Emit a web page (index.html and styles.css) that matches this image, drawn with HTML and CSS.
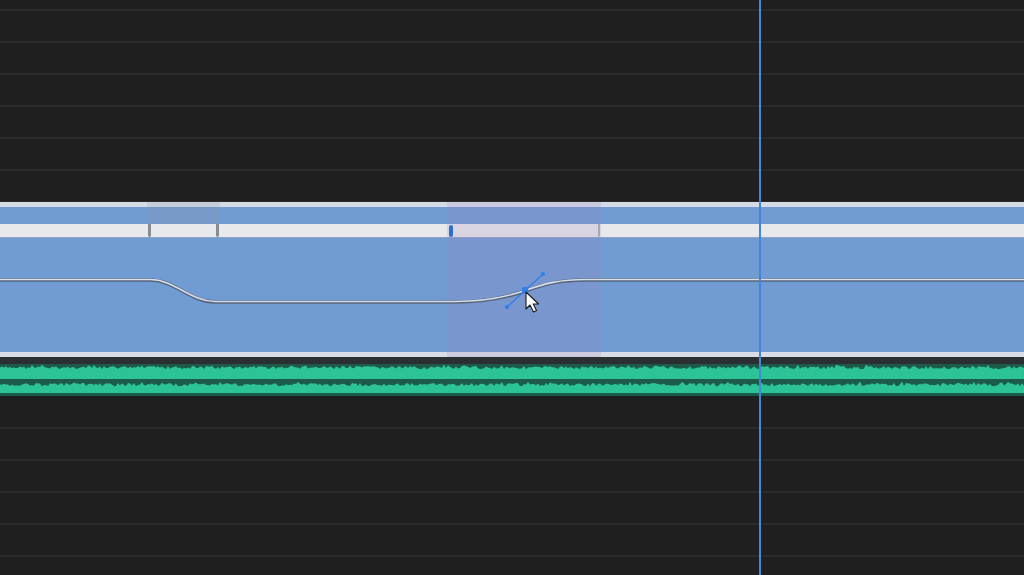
FILE: index.html
```html
<!DOCTYPE html>
<html lang="en">
<head>
  <meta charset="UTF-8">
  <meta name="viewport" content="width=device-width, initial-scale=1.0">
  <title>Timeline - Keyframes</title>
  <link rel="stylesheet" href="styles.css">
</head>
<body>
  <div class="timeline">
    <div class="lanes lanes-top"></div>

    <div class="clip">
      <div class="clip-top"></div>
      <div class="clip-head"></div>
      <div class="clip-bar"></div>
      <div class="clip-body"></div>
      <div class="clip-bottom"></div>

      <div class="tab"></div>
      <div class="pin pin-a"></div>
      <div class="pin pin-b"></div>
      <div class="selection"></div>
      <div class="pin pin-c"></div>
      <div class="pin pin-blue"></div>

      <svg class="curve" width="1024" height="155" viewBox="0 0 1024 155">
        <path d="M0 78 H150 C175 78 190 100 215 100 H455 C485 100 505 96 525 89 C545 82 560 78 585 78 H1024"
              fill="none" stroke="#56657c" stroke-width="3.5"/>
        <path d="M0 77.5 H150 C175 77.5 190 99.5 215 99.5 H455 C485 99.5 505 95.5 525 88.5 C545 81.5 560 77.5 585 77.5 H1024"
              fill="none" stroke="#d6deea" stroke-width="1.6"/>
        <line x1="507" y1="105" x2="543" y2="72" stroke="#2f7fe6" stroke-width="1.4"/>
        <circle cx="507" cy="105" r="2" fill="#2f7fe6"/>
        <circle cx="543" cy="72" r="2" fill="#2f7fe6"/>
        <circle cx="525" cy="88" r="3.2" fill="#2f7fe6"/>
        <path transform="translate(526 90)" d="M0 0 L0 17 L4 13 L7.5 20 L10.5 18.6 L7.2 12 L12.5 12 Z"
              fill="#fff" stroke="#1a1a1a" stroke-width="1.1" stroke-linejoin="round"/>
      </svg>
    </div>

    <div class="gap"></div>

    <div class="audio">
      <svg id="wave" width="1024" height="32" viewBox="0 0 1024 32"></svg>
    </div>

    <div class="lanes lanes-bottom"></div>

    <div class="playhead"></div>
  </div>
  <script src="wave.js"></script>
</body>
</html>
```

FILE: styles.css
```css
* {
  box-sizing: border-box;
}

body {
  margin: 0;
  background-color: #1f1f20;
  font-family: "Liberation Sans", Arial, sans-serif;
  overflow: hidden;
}

.timeline {
  position: relative;
  width: 1024px;
  height: 575px;
  display: flex;
  flex-direction: column;
  overflow: hidden;
}

.lanes {
  background-color: #1f1f20;
}

.lanes-top {
  height: 202px;
  background-image: repeating-linear-gradient(to bottom,
    transparent 0 9px, #2a2a2b 9px 11px, transparent 11px 32px);
}

.lanes-bottom {
  flex: 1;
  background-image: repeating-linear-gradient(to bottom,
    transparent 0 30px, #2a2a2b 30px 32px);
  background-position: 0 1px;
}

/* video clip with volume curve */
.clip {
  position: relative;
  height: 155px;
  display: flex;
  flex-direction: column;
}

.clip-top {
  height: 5px;
  background-color: #d4dbe6;
}

.clip-head {
  height: 17px;
  background-color: #709cd3;
}

.clip-bar {
  height: 14px;
  background-color: #e8e9ec;
  border-bottom: 1px solid #8ea2c2;
}

.clip-body {
  flex: 1;
  background-color: #709cd3;
}

.clip-bottom {
  height: 5px;
  background-color: #d9dde5;
}

.tab {
  position: absolute;
  left: 147px;
  top: 0;
  width: 73px;
  height: 22px;
  background-color: rgba(150, 150, 165, 0.2);
}

.selection {
  position: absolute;
  left: 447px;
  top: 0;
  width: 154px;
  height: 155px;
  background-color: rgba(165, 130, 190, 0.2);
}

.pin {
  position: absolute;
  top: 22px;
  width: 3px;
  height: 14px;
  background-color: #868a92;
  clip-path: polygon(0 0, 100% 0, 100% 80%, 50% 100%, 0 80%);
}

.pin-a { left: 148px; }
.pin-b { left: 216px; }
.pin-c {
  left: 598px;
  width: 2px;
  background-color: #a7a9b0;
}

.pin-blue {
  left: 449px;
  top: 23px;
  width: 4px;
  height: 12px;
  background-color: #2f6fd2;
  border-radius: 2px;
  clip-path: none;
}

.curve {
  position: absolute;
  left: 0;
  top: 0;
}

.gap {
  height: 7px;
  background-color: #2c2f32;
}

/* audio clip */
.audio {
  height: 32px;
  background-color: #1c5a4a;
}

.audio svg {
  display: block;
}

.playhead {
  position: absolute;
  left: 759px;
  top: 0;
  width: 2px;
  height: 575px;
  background-color: #4287dc;
}
```

FILE: wave.js
```js
// draws the two audio channels with a jagged top edge
(function () {
  var svg = document.getElementById('wave');
  var ns = 'http://www.w3.org/2000/svg';
  var seed = 7;

  function rand() {
    seed = (seed * 9301 + 49297) % 233280;
    return seed / 233280;
  }

  function channel(top, bottom) {
    var d = 'M0 ' + bottom;
    for (var x = 0; x <= 1024; x += 2) {
      var y = top + rand() * 3.2;
      if (rand() > 0.9) y -= 1.5;
      d += ' L' + x + ' ' + y.toFixed(1);
    }
    d += ' L1024 ' + bottom + ' Z';
    var p = document.createElementNS(ns, 'path');
    p.setAttribute('d', d);
    p.setAttribute('fill', '#2cc496');
    svg.appendChild(p);
  }

  channel(2, 15);
  channel(19, 29);
})();
```
